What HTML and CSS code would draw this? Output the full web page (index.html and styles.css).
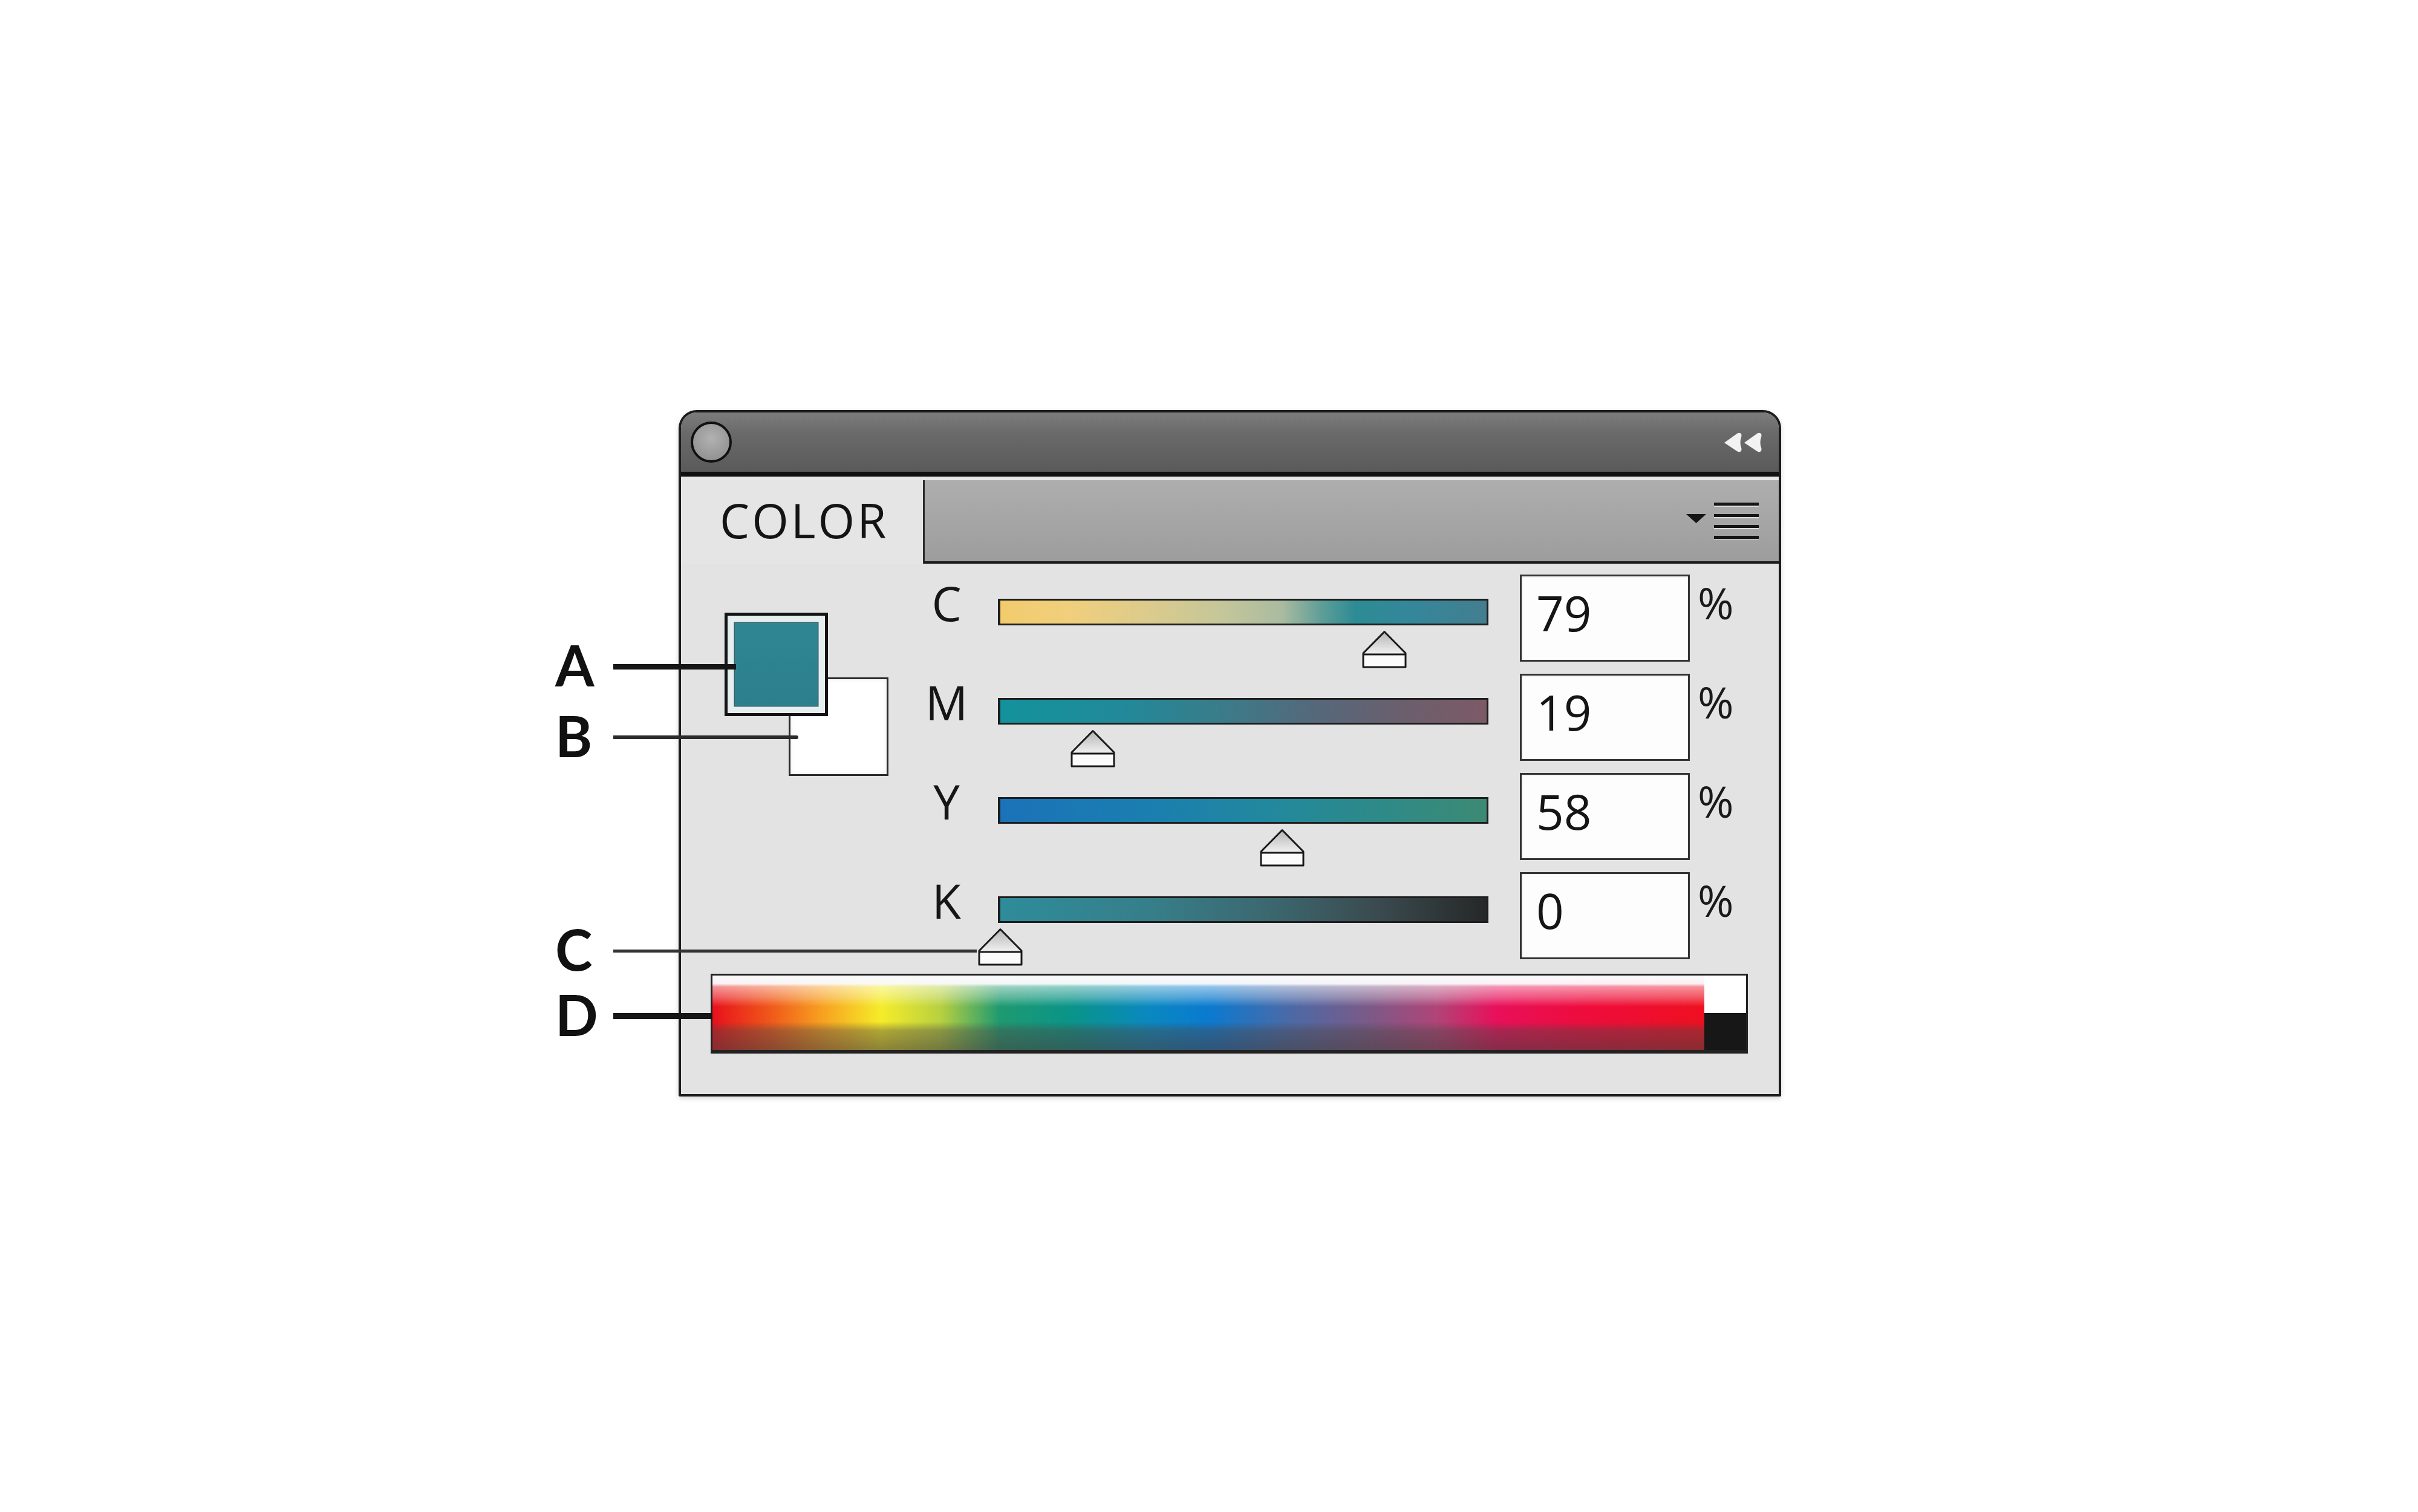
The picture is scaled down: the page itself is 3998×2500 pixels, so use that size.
FILE: index.html
```html
<!DOCTYPE html>
<html lang="en">
<head>
<meta charset="utf-8">
<title>Color</title>
<link rel="stylesheet" href="styles.css">
</head>
<body>
<div class="stage">
  <section class="panel">
    <header class="titlebar">
      <span class="close-dot"></span>
      <svg class="collapse" viewBox="0 0 64 37" width="64" height="37">
        <path d="M1 19 L22 4 C27 1 31 4 29 10 C27 15 27 22 29 27 C31 33 27 36 22 33 Z" fill="#f2f2f2"/>
        <path d="M34 19 L55 4 C60 1 64 4 62 10 C60 15 60 22 62 27 C64 33 60 36 55 33 Z" fill="#f2f2f2"/>
      </svg>
    </header>

    <nav class="tabs">
      <div class="tab">COLOR</div>
      <div class="tab-fill">
        <svg class="menu" viewBox="0 0 120 62" width="120" height="62">
          <polygon points="0,20 33,20 16.5,35" fill="#151515"/>
          <g fill="#151515">
            <rect x="46" y="1" width="74" height="5"/>
            <rect x="46" y="20" width="74" height="5"/>
            <rect x="46" y="38" width="74" height="5"/>
            <rect x="46" y="56" width="74" height="5"/>
          </g>
          <g fill="#f4f4f4" opacity="0.7">
            <rect x="46" y="6" width="74" height="2"/>
            <rect x="46" y="25" width="74" height="2"/>
            <rect x="46" y="43" width="74" height="2"/>
            <rect x="46" y="61" width="74" height="1"/>
          </g>
        </svg>
      </div>
    </nav>

    <div class="content">
      <div class="upper">
        <div class="swatches">
          <div class="swatch-stack">
            <div class="swatch stroke"></div>
            <div class="swatch fill"><span></span></div>
          </div>
        </div>

        <div class="channels">
          <div class="channel">
            <span class="ch-label">C</span>
            <div class="track track-c">
              <svg class="thumb" style="left:79%" viewBox="0 0 75 63" width="75" height="63">
                <defs><linearGradient id="thumbC" x1="0" y1="0" x2="0" y2="1"><stop offset="0" stop-color="#b4b4b4"/><stop offset="1" stop-color="#f2f2f2"/></linearGradient></defs>
                <rect x="2.5" y="40" width="70" height="21" fill="#fbfbfb"/>
                <polygon points="37.5,2.5 72.5,40 2.5,40" fill="url(#thumbC)"/>
                <path d="M37.5 2.5 L72.5 38 L72.5 61 L2.5 61 L2.5 38 Z M2.5 40 L72.5 40" fill="none" stroke="#1a1a1a" stroke-width="3" stroke-linejoin="round"/>
              </svg>
            </div>
            <div class="value">79</div>
            <span class="pct">%</span>
          </div>

          <div class="channel">
            <span class="ch-label">M</span>
            <div class="track track-m">
              <svg class="thumb" style="left:19%" viewBox="0 0 75 63" width="75" height="63">
                <defs><linearGradient id="thumbM" x1="0" y1="0" x2="0" y2="1"><stop offset="0" stop-color="#b4b4b4"/><stop offset="1" stop-color="#f2f2f2"/></linearGradient></defs>
                <rect x="2.5" y="40" width="70" height="21" fill="#fbfbfb"/>
                <polygon points="37.5,2.5 72.5,40 2.5,40" fill="url(#thumbM)"/>
                <path d="M37.5 2.5 L72.5 38 L72.5 61 L2.5 61 L2.5 38 Z M2.5 40 L72.5 40" fill="none" stroke="#1a1a1a" stroke-width="3" stroke-linejoin="round"/>
              </svg>
            </div>
            <div class="value">19</div>
            <span class="pct">%</span>
          </div>

          <div class="channel">
            <span class="ch-label">Y</span>
            <div class="track track-y">
              <svg class="thumb" style="left:58%" viewBox="0 0 75 63" width="75" height="63">
                <defs><linearGradient id="thumbY" x1="0" y1="0" x2="0" y2="1"><stop offset="0" stop-color="#b4b4b4"/><stop offset="1" stop-color="#f2f2f2"/></linearGradient></defs>
                <rect x="2.5" y="40" width="70" height="21" fill="#fbfbfb"/>
                <polygon points="37.5,2.5 72.5,40 2.5,40" fill="url(#thumbY)"/>
                <path d="M37.5 2.5 L72.5 38 L72.5 61 L2.5 61 L2.5 38 Z M2.5 40 L72.5 40" fill="none" stroke="#1a1a1a" stroke-width="3" stroke-linejoin="round"/>
              </svg>
            </div>
            <div class="value">58</div>
            <span class="pct">%</span>
          </div>

          <div class="channel">
            <span class="ch-label">K</span>
            <div class="track track-k">
              <svg class="thumb" style="left:0%" viewBox="0 0 75 63" width="75" height="63">
                <defs><linearGradient id="thumbK" x1="0" y1="0" x2="0" y2="1"><stop offset="0" stop-color="#b4b4b4"/><stop offset="1" stop-color="#f2f2f2"/></linearGradient></defs>
                <rect x="2.5" y="40" width="70" height="21" fill="#fbfbfb"/>
                <polygon points="37.5,2.5 72.5,40 2.5,40" fill="url(#thumbK)"/>
                <path d="M37.5 2.5 L72.5 38 L72.5 61 L2.5 61 L2.5 38 Z M2.5 40 L72.5 40" fill="none" stroke="#1a1a1a" stroke-width="3" stroke-linejoin="round"/>
              </svg>
            </div>
            <div class="value">0</div>
            <span class="pct">%</span>
          </div>
        </div>
      </div>

      <div class="spectrum">
        <div class="hues"></div>
        <div class="bw"><span class="white"></span><span class="black"></span></div>
      </div>
    </div>
  </section>

  <div class="callout callout-a"><b>A</b><i class="leader"></i></div>
  <div class="callout callout-b"><b>B</b><i class="leader"></i></div>
  <div class="callout callout-c"><b>C</b><i class="leader"></i></div>
  <div class="callout callout-d"><b>D</b><i class="leader"></i></div>
</div>
</body>
</html>
```

FILE: styles.css
```css
* { box-sizing: border-box; }

html, body {
  margin: 0;
  background: #ffffff;
}

body {
  font-family: "Open Sans", "Liberation Sans", sans-serif;
  color: #151515;
}

.stage {
  position: relative;
  width: 3998px;
  height: 2500px;
  padding: 678px 0 0 1122px;
}

/* ---------- panel frame ---------- */
.panel {
  width: 1823px;
  height: 1135px;
  border: 4px solid #1c1c1c;
  border-radius: 30px 30px 2px 2px;
  background: #e3e3e4;
  display: flex;
  flex-direction: column;
  overflow: hidden;
  box-shadow: 0 3px 8px rgba(0, 0, 0, 0.16);
}

.titlebar {
  height: 106px;
  flex: none;
  display: flex;
  align-items: center;
  justify-content: space-between;
  padding: 0 27px 0 16px;
  background: linear-gradient(#7c7c7c 0%, #6a6a6a 35%, #5a5a5a 100%);
  border-bottom: 8px solid #111111;
}

.close-dot {
  width: 68px;
  height: 68px;
  border: 4px solid #111111;
  border-radius: 50%;
  background: radial-gradient(circle at 50% 40%, #b2b2b2 0%, #999999 60%, #8a8a8a 100%);
}

.collapse { display: block; }

/* ---------- tab strip ---------- */
.tabs {
  height: 144px;
  flex: none;
  display: flex;
  padding-top: 6px;
  background: #e8e8e9;
}

.tab {
  width: 400px;
  display: flex;
  align-items: center;
  padding: 0 0 6px 64px;
  font-size: 78px;
  line-height: 1;
  letter-spacing: 4px;
  color: #141414;
  background: #e5e5e6;
}

.tab-fill {
  flex: 1;
  display: flex;
  align-items: center;
  justify-content: flex-end;
  padding-right: 33px;
  border-left: 3px solid #2a2a2a;
  border-bottom: 4px solid #1a1a1a;
  background: linear-gradient(#aeaeae, #9d9d9e);
}

.menu { display: block; }

/* ---------- body ---------- */
.content {
  flex: 1;
  display: flex;
  flex-direction: column;
  padding-top: 18px;
}

.upper { display: flex; }

.swatches {
  width: 404px;
  padding: 63px 0 0 72px;
}

.swatch-stack {
  display: grid;
  width: 271px;
  height: 270px;
}

.swatch { grid-area: 1 / 1; }

.swatch.stroke {
  width: 165px;
  height: 163px;
  margin: 107px 0 0 106px;
  border: 3px solid #2a2a2a;
  background: #ffffff;
  box-shadow: inset 0 0 8px rgba(0, 0, 0, 0.07);
}

.swatch.fill {
  z-index: 1;
  width: 171px;
  height: 171px;
  padding: 12px;
  border: 5px solid #141414;
  background: #e7eef0;
}

.swatch.fill span {
  display: block;
  width: 100%;
  height: 100%;
  background: linear-gradient(#2f8692, #2c808d);
  box-shadow: 0 0 0 1.5px #3b5e64;
}

/* ---------- CMYK channels ---------- */
.channels {
  display: flex;
  flex-direction: column;
  gap: 20px;
}

.channel {
  height: 144px;
  display: flex;
  align-items: flex-start;
}

.ch-label {
  width: 70px;
  margin-top: 8px;
  text-align: center;
  font-size: 78px;
  line-height: 1;
  color: #161616;
}

.track {
  position: relative;
  width: 811px;
  height: 44px;
  margin: 40px 0 0 50px;
  border: 3px solid #1e1e1e;
  border-left-width: 4px;
}

.track-c {
  background: linear-gradient(90deg, #f3cb6c 0%, #f0cf7c 14%, #dccb8c 30%, #c4c69a 46%, #a9bba0 58%, #5f9e98 66%, #2c8c94 73%, #34879a 84%, #437e90 100%);
}

.track-m {
  background: linear-gradient(90deg, #12929c 0%, #21899a 25%, #3a7c8a 45%, #55687a 65%, #6e5e6c 85%, #7c5a66 100%);
}

.track-y {
  background: linear-gradient(90deg, #1b72b8 0%, #1a7eb0 30%, #22889e 55%, #2e8a88 78%, #3c8a74 100%);
}

.track-k {
  background: linear-gradient(90deg, #2e8c9a 0%, #367f8a 30%, #3c6870 55%, #3a4a4e 78%, #262828 100%);
}

.thumb {
  position: absolute;
  top: calc(100% + 11px);
  transform: translateX(-50%);
  display: block;
}

.value {
  width: 281px;
  height: 144px;
  margin-left: 52px;
  padding: 20px 0 0 24px;
  border: 3px solid #343434;
  background: #fdfdfd;
  box-shadow: inset 1px 1px 3px rgba(0, 0, 0, 0.08);
  font-size: 80px;
  line-height: 1;
  color: #151515;
}

.pct {
  margin: 10px 0 0 13px;
  font-size: 72px;
  line-height: 1;
  color: #1a1a1a;
}

/* ---------- spectrum ramp ---------- */
.spectrum {
  width: 1715px;
  height: 132px;
  margin: 24px 0 0 49px;
  display: flex;
  border: 3px solid #222222;
  border-bottom-width: 6px;
}

.hues {
  flex: 1;
  background:
    linear-gradient(to bottom,
      rgba(250, 250, 252, 1) 0%,
      rgba(250, 250, 252, 0.96) 11%,
      rgba(255, 255, 255, 0.55) 15%,
      rgba(255, 255, 255, 0.28) 30%,
      rgba(255, 255, 255, 0) 42%,
      rgba(0, 0, 0, 0) 62%,
      rgba(75, 68, 68, 0.42) 74%,
      rgba(70, 62, 62, 0.6) 100%),
    linear-gradient(to right,
      #e8101c 0%, #f05a1a 6%, #f7a020 11%, #f6ec2a 17%,
      #b8d040 23%, #1e9a70 29%, #0a9488 36%, #0a88c0 44%,
      #0a7ad0 50%, #4a6aa8 58%, #7a5a88 66%, #b04478 73%,
      #e8105a 79%, #ee0c3c 88%, #ee1020 100%);
}

.bw {
  width: 69px;
  display: flex;
  flex-direction: column;
}

.bw .white { flex: 1; background: #ffffff; }
.bw .black { flex: 1; background: #171717; }

/* ---------- callout labels ---------- */
.callout {
  position: absolute;
  left: 918px;
  z-index: 2;
  height: 96px;
  display: flex;
  align-items: center;
}

.callout b {
  width: 96px;
  padding-bottom: 6px;
  font-family: Lato, "Liberation Sans", sans-serif;
  font-weight: 700;
  font-size: 93px;
  line-height: 1;
  color: #111111;
}

.leader {
  display: block;
  background: #161616;
}

.callout-a { top: 1054px; }
.callout-a .leader { width: 203px; height: 9px; }

.callout-b { top: 1171px; }
.callout-b .leader { width: 306px; height: 6px; background: #2c2c2c; border-radius: 0 3px 3px 0; }

.callout-c { top: 1524px; }
.callout-c .leader { width: 601px; height: 5px; background: #333333; }

.callout-d { top: 1632px; }
.callout-d .leader { width: 164px; height: 10px; }
```
